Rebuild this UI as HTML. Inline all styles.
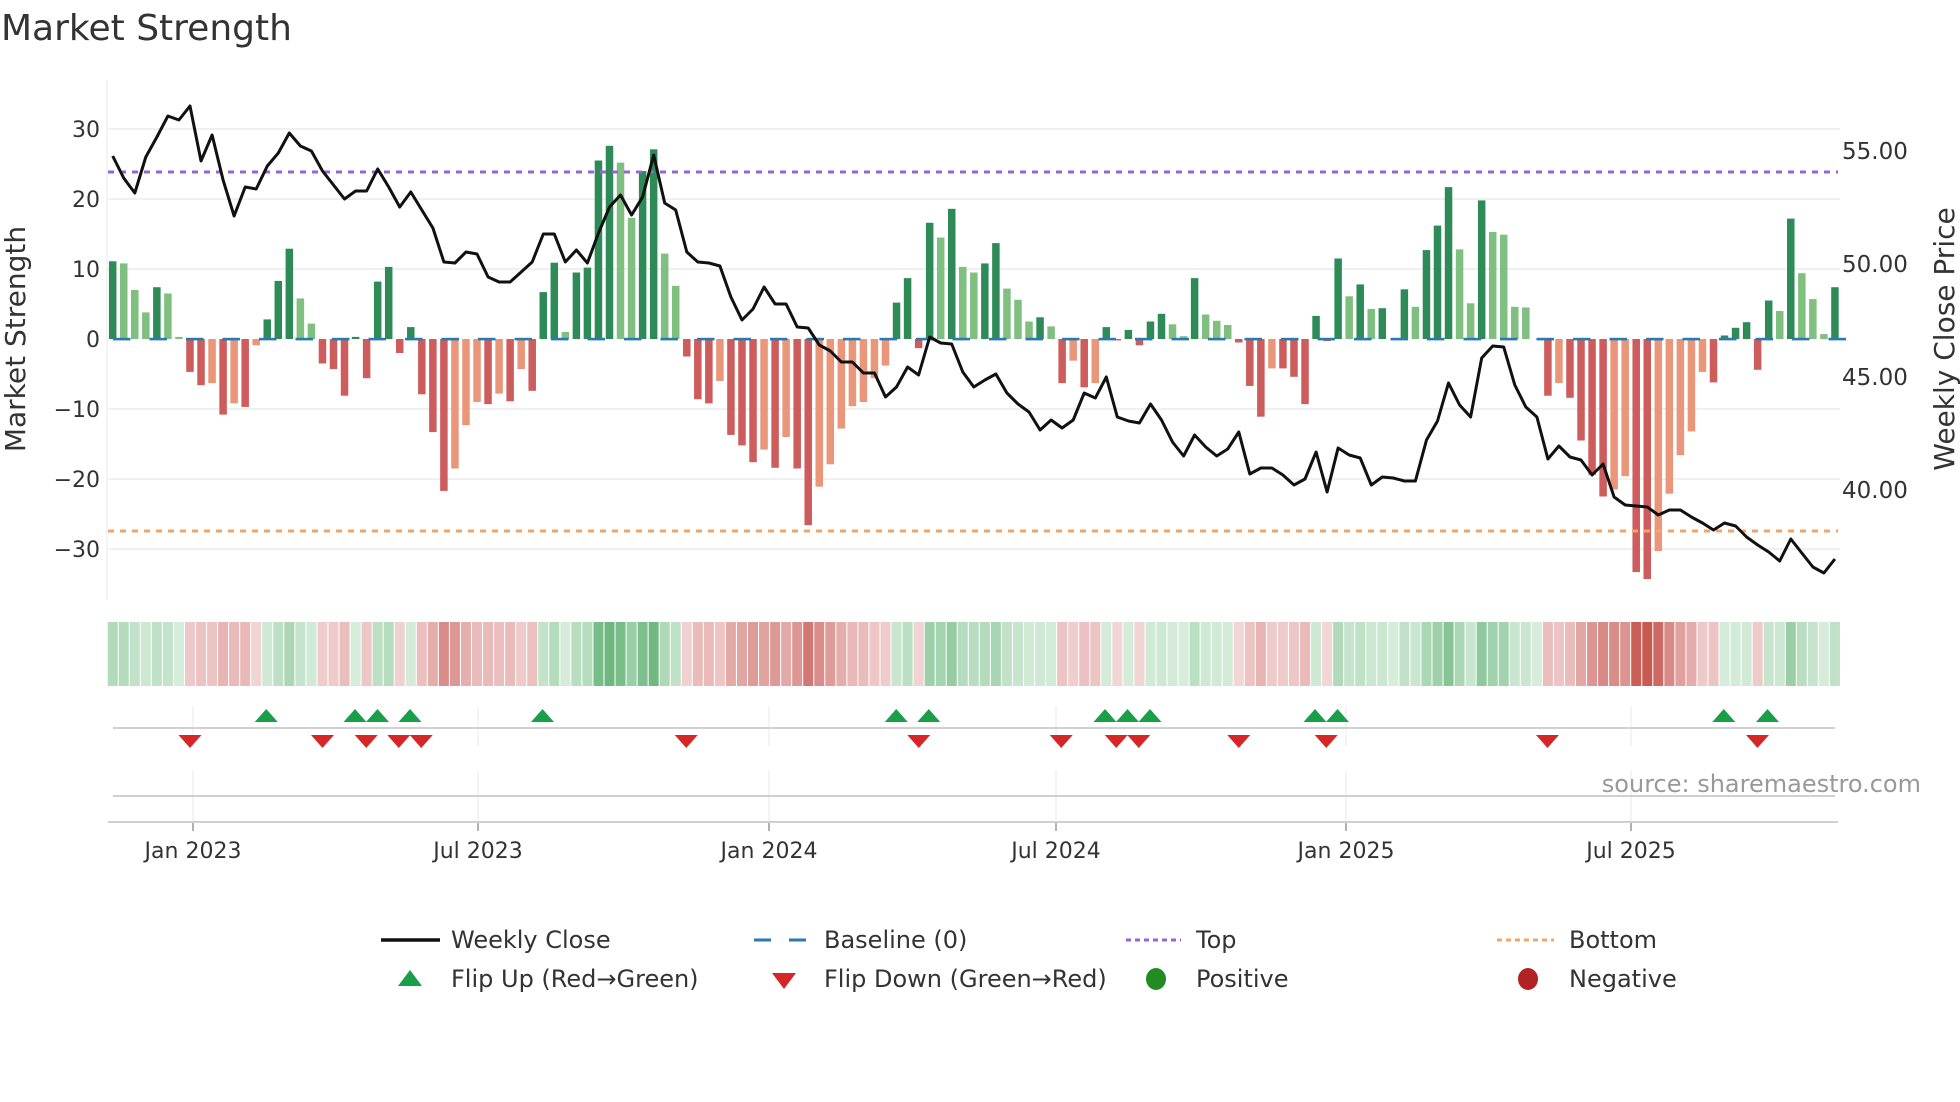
<!DOCTYPE html>
<html><head><meta charset="utf-8"><style>
html,body{margin:0;padding:0;background:#fff;}
svg{display:block;font-family:"DejaVu Sans","Liberation Sans",sans-serif;}
</style></head><body>
<svg id="c" width="1960" height="1102" viewBox="0 0 1960 1102" xmlns="http://www.w3.org/2000/svg">
<rect width="1960" height="1102" fill="#fff"/>
<text x="1" y="40" font-size="36" fill="#333">Market Strength</text>
<line x1="107" y1="80" x2="107" y2="600" stroke="#eef0f3" stroke-width="1.5"/>
<g stroke="#eef0f3" stroke-width="2">
<line x1="108" y1="129" x2="1840" y2="129"/><line x1="108" y1="199" x2="1840" y2="199"/>
<line x1="108" y1="269" x2="1840" y2="269"/><line x1="108" y1="409" x2="1840" y2="409"/>
<line x1="108" y1="479" x2="1840" y2="479"/><line x1="108" y1="549" x2="1840" y2="549"/>
</g>
<g font-size="22" fill="#333" text-anchor="end">
<text x="100" y="137">30</text><text x="100" y="207">20</text><text x="100" y="277">10</text>
<text x="100" y="347">0</text><text x="100" y="417">−10</text><text x="100" y="487">−20</text><text x="100" y="557">−30</text>
</g>
<g font-size="23" fill="#333">
<text x="1842" y="159">55.00</text><text x="1842" y="272">50.00</text>
<text x="1842" y="385">45.00</text><text x="1842" y="498">40.00</text>
</g>
<text transform="translate(25,339) rotate(-90)" font-size="28" fill="#333" text-anchor="middle">Market Strength</text>
<text transform="translate(1954,339) rotate(-90)" font-size="28" fill="#333" text-anchor="middle">Weekly Close Price</text>
<g id="bars"></g>
<line x1="108" y1="172" x2="1838" y2="172" stroke="#9b63d8" stroke-width="3" stroke-dasharray="6 6"/>
<line x1="108" y1="531" x2="1838" y2="531" stroke="#f2a56a" stroke-width="3" stroke-dasharray="6 6"/>
<g id="base"></g>
<polyline id="price" fill="none" stroke="#111" stroke-width="3" stroke-linejoin="round"/>
<g id="heat"></g>
<g stroke="#eef0f3" stroke-width="1.5" id="vg"></g>
<line x1="113" y1="728" x2="1835" y2="728" stroke="#d0d0d0" stroke-width="2"/>
<line x1="113" y1="796" x2="1835" y2="796" stroke="#d0d0d0" stroke-width="2"/>
<line x1="108" y1="822" x2="1838" y2="822" stroke="#d0d0d0" stroke-width="2"/>
<g id="marks"></g>
<text x="1921" y="792" font-size="24" fill="#999" text-anchor="end">source: sharemaestro.com</text>
<g font-size="22" fill="#333" text-anchor="middle">
<text x="193" y="858">Jan 2023</text><text x="478" y="858">Jul 2023</text>
<text x="769" y="858">Jan 2024</text><text x="1056" y="858">Jul 2024</text>
<text x="1346" y="858">Jan 2025</text><text x="1631" y="858">Jul 2025</text>
</g>
<g font-size="24" fill="#333">
<line x1="381" y1="940" x2="440" y2="940" stroke="#111" stroke-width="3.5"/>
<text x="451" y="948">Weekly Close</text>
<line x1="754" y1="940" x2="806" y2="940" stroke="#2a7ab0" stroke-width="3" stroke-dasharray="17 18"/>
<text x="824" y="948">Baseline (0)</text>
<line x1="1126" y1="940" x2="1181" y2="940" stroke="#9b63d8" stroke-width="3" stroke-dasharray="5 4"/>
<text x="1196" y="948">Top</text>
<line x1="1497" y1="940" x2="1554" y2="940" stroke="#f2a56a" stroke-width="3" stroke-dasharray="5 4"/>
<text x="1569" y="948">Bottom</text>
<polygon points="398,986 422,986 410,970" fill="#1a9e48"/>
<text x="451" y="987">Flip Up (Red→Green)</text>
<polygon points="772,973 796,973 784,989" fill="#d62728"/>
<text x="824" y="987">Flip Down (Green→Red)</text>
<ellipse cx="1156" cy="979" rx="10" ry="11" fill="#228b22"/>
<text x="1196" y="987">Positive</text>
<ellipse cx="1528" cy="979" rx="10" ry="11" fill="#b22222"/>
<text x="1569" y="987">Negative</text>
</g>
</svg>
<script>
var V=[11.1,10.8,7.0,3.8,7.4,6.5,0.3,-4.7,-6.6,-6.3,-10.8,-9.2,-9.7,-0.9,2.8,8.3,12.9,5.8,2.2,-3.5,-4.3,-8.1,0.3,-5.6,8.2,10.3,-2.0,1.7,-7.9,-13.3,-21.7,-18.5,-12.3,-9,-9.3,-7.8,-8.9,-4.3,-7.4,6.7,10.9,1.0,9.5,10.2,25.5,27.6,25.2,17.3,24,27.1,12.2,7.6,-2.5,-8.6,-9.2,-6,-13.7,-15.2,-17.6,-15.8,-18.4,-14,-18.5,-26.6,-21.1,-17.9,-12.8,-9.6,-9,-5.6,-3.8,5.2,8.7,-1.3,16.6,14.5,18.6,10.3,9.5,10.8,13.7,7.2,5.6,2.5,3.1,1.8,-6.3,-3.1,-6.9,-6.3,1.7,-0.2,1.3,-0.9,2.5,3.6,2.1,0.4,8.7,3.5,2.6,2.0,-0.5,-6.7,-11.1,-4.2,-4.2,-5.4,-9.3,3.3,-0.3,11.5,6.1,7.8,4.3,4.4,0,7.1,4.6,12.7,16.2,21.7,12.8,5.1,19.8,15.3,14.9,4.6,4.5,0,-8.1,-6.3,-8.4,-14.5,-19.4,-22.5,-21.5,-19.6,-33.3,-34.3,-30.3,-22.1,-16.6,-13.2,-4.7,-6.2,0.5,1.6,2.4,-4.4,5.5,4,17.2,9.4,5.7,0.7,7.4];
var L=[1,2,3,5,6,9,11,13,17,18,31,32,33,35,37,41,46,47,50,51,55,59,61,64,65,66,67,68,69,70,75,77,78,81,82,83,85,87,89,96,97,99,100,101,105,112,114,118,122,123,125,126,127,128,131,136,137,140,141,142,143,144,151,153,154,155];
var P=[156,178,193,157,137,116,120,106,161,135,180,216,187,189,166,153,133,146,151,171,185,199,191,191,169,187,207,192,210,228,262,263,252,254,277,282,282,272,262,234,234,262,250,263,233,207,195,215,197,155,203,210,252,262,263,266,297,320,309,287,304,304,327,328,345,351,362,362,373,373,397,387,367,375,337,343,344,372,387,380,374,393,404,412,430,420,428,420,393,398,377,417,421,423,404,420,442,456,435,447,456,449,432,474,468,468,475,485,479,452,492,448,455,458,485,477,478,481,481,440,421,383,405,417,358,346,347,385,407,417,459,446,457,460,475,464,497,505,506,507,515,510,510,517,523,530,523,526,537,545,552,561,539,553,567,573,559];
var NS="http://www.w3.org/2000/svg";
function el(t,a,p){var e=document.createElementNS(NS,t);for(var k in a)e.setAttribute(k,a[k]);document.getElementById(p).appendChild(e);return e;}
function X(i){return 112.7+11.04*i;}
var ls={};L.forEach(function(i){ls[i]=1;});
function mix(a,b,t){return 'rgb('+[0,1,2].map(function(k){return Math.round(a[k]+(b[k]-a[k])*t);}).join(',')+')';}
var pts=[];
for(var i=0;i<V.length;i++){
 var v=V[i],x=X(i),h=Math.abs(v)*7;
 var col=v>=0?(ls[i]?'#7fbf7f':'#2e8b57'):(ls[i]?'#e9967a':'#cd5c5c');
 if(v!=0)el('rect',{x:x-3.75,y:v>=0?339-h:339,width:7.5,height:h,fill:col},'bars');
 var t=Math.pow(Math.min(1,Math.abs(v)/34),1.15);
 var hc=v>=0?mix([215,237,220],[82,170,102],t):mix([242,214,214],[200,90,84],t);
 el('rect',{x:x-5,y:622,width:10,height:64,fill:hc},'heat');
 pts.push(x.toFixed(1)+','+P[i]);
}
document.getElementById('price').setAttribute('points',pts.join(' '));
for(var x=113;x<1835;x+=36.5)el('rect',{x:x,y:337.8,width:17.5,height:2.6,fill:'#2a7ab0'},'base');
[193,478,769,1056,1346,1631].forEach(function(x){
 el('line',{x1:x,y1:706,x2:x,y2:746},'vg');el('line',{x1:x,y1:770,x2:x,y2:822},'vg');
 el('line',{x1:x,y1:822,x2:x,y2:831,stroke:'#999'},'vg');
});
var up=[213,284,302,328,434,717,743,884,902,920,1052,1070,1379,1414];
var dn=[152,258,293,319,337,549,735,849,893,911,991,1061,1238,1406];
up.forEach(function(d){var x=d*1.25;el('polygon',{points:(x-11.5)+',722 '+(x+11.5)+',722 '+x+',709',fill:'#1a9e48'},'marks');});
dn.forEach(function(d){var x=d*1.25;el('polygon',{points:(x-11.5)+',735 '+(x+11.5)+',735 '+x+',748',fill:'#d62728'},'marks');});
</script>
</body></html>
